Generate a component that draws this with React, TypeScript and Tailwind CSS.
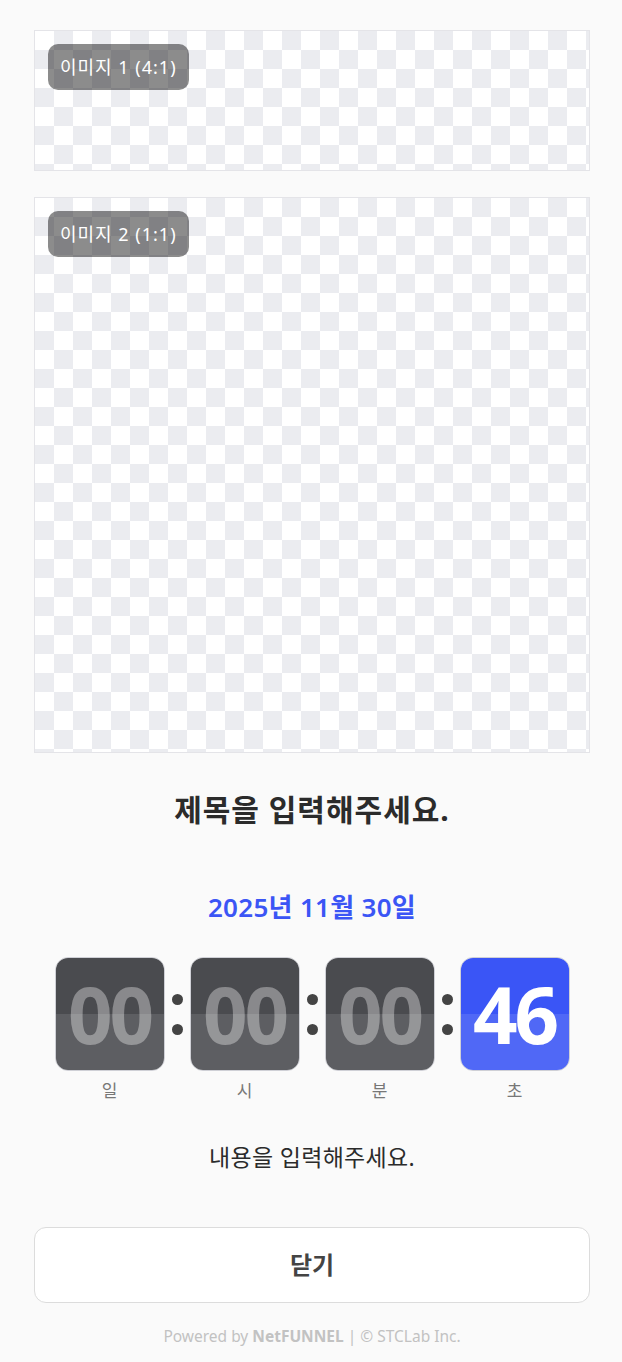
import React from "react";

const font = { fontFamily: '"Noto Sans", "Noto Sans CJK KR", sans-serif' };

interface TimeBoxProps {
  value: string;
  label: string;
  active?: boolean;
}

function TimeBox({ value, label, active }: TimeBoxProps) {
  return (
    <div className="flex flex-col items-center">
      <div className="relative w-[110px] h-[114px] rounded-[13px] overflow-hidden border border-[#cfd0d6] flex flex-col">
        <div className={"h-1/2 " + (active ? "bg-[#3a55f6]" : "bg-[#4a4b4f]")}></div>
        <div className={"h-1/2 " + (active ? "bg-[#5068f6]" : "bg-[#5d5e62]")}></div>
        <div
          className={
            "absolute inset-0 flex items-center justify-center text-[78px] font-bold tracking-[-3px] leading-none " +
            (active ? "text-white" : "text-white/35")
          }
        >
          {value}
        </div>
      </div>
      <p className="mt-2 text-[17px] leading-6 text-[#777]">{label}</p>
    </div>
  );
}

function Colon() {
  return (
    <div className="w-[25px] h-[114px] flex flex-col items-center justify-center gap-[19px]">
      <div className="w-[11px] h-[11px] rounded-full bg-[#444]"></div>
      <div className="w-[11px] h-[11px] rounded-full bg-[#444]"></div>
    </div>
  );
}

function Placeholder({ label, tall }: { label: string; tall?: boolean }) {
  return (
    <div
      className={
        "relative w-full border border-[#e4e4e8] bg-[image:conic-gradient(#ebecf0_25%,#fff_0_50%,#ebecf0_0_75%,#fff_0)] bg-[length:38px_38px] " +
        (tall ? "h-[556px]" : "h-[141px]")
      }
    >
      <span className="absolute left-[13px] top-[13px] h-[46px] px-[12px] flex items-center rounded-[10px] bg-black/45 text-white text-[18px] tracking-[1px]">
        {label}
      </span>
    </div>
  );
}

export default function App() {
  return (
    <div className="min-h-screen bg-[#fafafa] pl-[34px] pr-[32px] pt-[30px] flex flex-col items-center" style={font}>
      <Placeholder label="이미지 1 (4:1)" />
      <div className="h-[26px]"></div>
      <Placeholder label="이미지 2 (1:1)" tall />

      <h1 className="mt-[37px] text-[30px] leading-10 font-bold tracking-[1px] text-[#2b2b2b]">제목을 입력해주세요.</h1>

      <p className="mt-[61px] text-[26px] leading-8 font-semibold tracking-[0.3px] text-[#3b55f5]">2025년 11월 30일</p>

      <div className="mt-[34px] flex items-start">
        <TimeBox value="00" label="일" />
        <Colon />
        <TimeBox value="00" label="시" />
        <Colon />
        <TimeBox value="00" label="분" />
        <Colon />
        <TimeBox value="46" label="초" active />
      </div>

      <p className="mt-[38px] text-[23px] leading-8 tracking-[0.3px] text-[#2b2b2b]">내용을 입력해주세요.</p>

      <button className="mt-[54px] w-full h-[76px] rounded-xl bg-white border border-[#dcdcdc] text-[24px] font-semibold text-[#444]">
        닫기
      </button>

      <p className="mt-[23px] text-[15.5px] leading-5 text-[#c2c2c2]">
        Powered by <span className="font-bold">NetFUNNEL</span> | © STCLab Inc.
      </p>
    </div>
  );
}
